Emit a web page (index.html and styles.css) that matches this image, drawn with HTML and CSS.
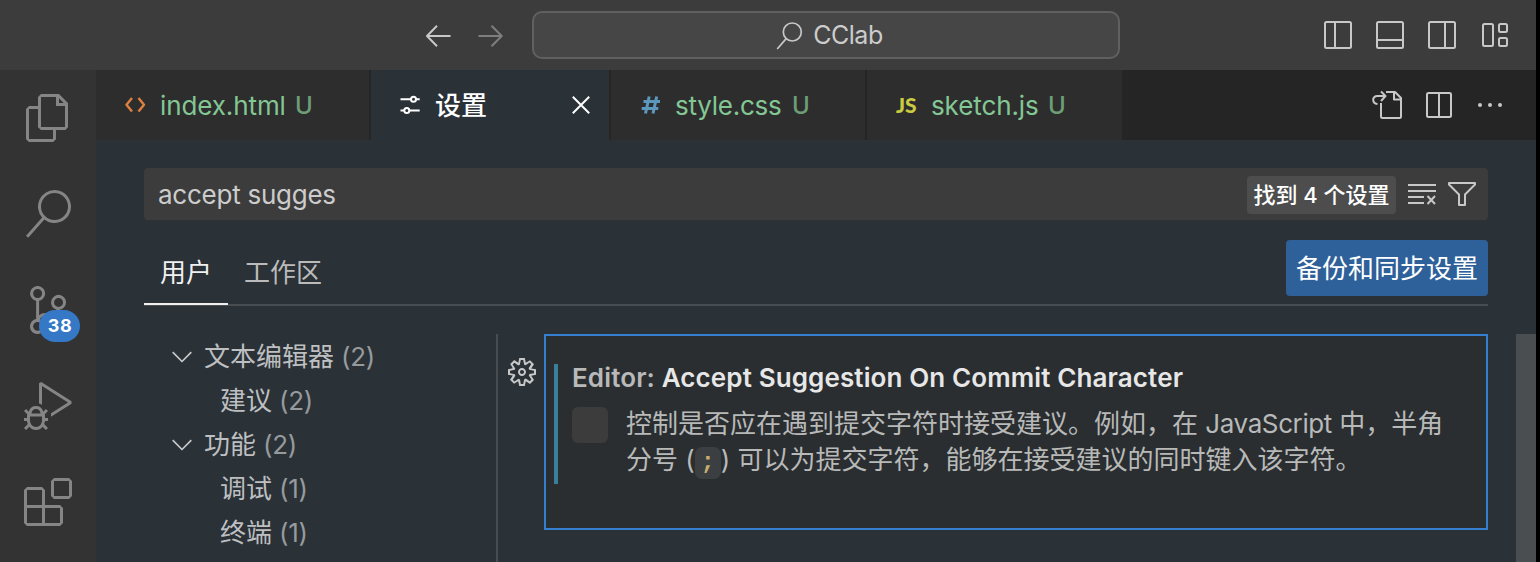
FILE: index.html
```html
<!DOCTYPE html>
<html lang="zh-CN">
<head>
<meta charset="utf-8">
<title>设置 - CClab</title>
<link rel="stylesheet" href="styles.css">
</head>
<body>
<div class="window">
  <header class="titlebar">
    <div class="history">
      <svg class="icon" width="26" height="24" viewBox="425 24 26 24"><path class="line light" d="M450.500 36H427M437 25.700L427 36L437 46.300"/></svg>
      <svg class="icon" width="26" height="24" viewBox="477 24 26 24"><path class="line dim" d="M478.500 36H502M491.500 25.700L501.700 36L491.500 46.300"/></svg>
    </div>
    <div class="command">
      <svg class="icon" width="28" height="30" viewBox="777 20 28 30"><g class="line light thin"><circle cx="793.300" cy="31" r="9"/><path d="M787.200 37.600L778.200 48"/></g></svg>
      <span class="project">CClab</span>
    </div>
    <div class="layouts">
      <svg class="icon" width="28" height="28" viewBox="0 0 28 28"><g class="line light"><rect x="1" y="1" width="26" height="26" rx="1.500"/><path d="M11 1V27"/></g></svg>
      <svg class="icon" width="28" height="28" viewBox="0 0 28 28"><g class="line light"><rect x="1" y="1" width="26" height="26" rx="1.500"/><path d="M1 19H27"/></g></svg>
      <svg class="icon" width="28" height="28" viewBox="0 0 28 28"><g class="line light"><rect x="1" y="1" width="26" height="26" rx="1.500"/><path d="M17 1V27"/></g></svg>
      <svg class="icon" width="28" height="28" viewBox="1480 21 28 28"><g class="line light"><rect x="1483" y="24" width="10" height="22" rx="1.500"/><rect x="1499" y="24" width="8" height="8" rx="1.500"/><rect x="1499" y="38" width="8" height="8" rx="1.500"/></g></svg>
    </div>
  </header>
  <div class="workbench">
    <nav class="activity">
      <svg width="48" height="48" viewBox="0 0 24 24"><path d="M17.500 0h-9L7 1.500V6H2.500L1 7.500v15.070L2.500 24h12.070L16 22.570V18h4.700l1.300-1.430V4.500L17.500 0zm0 2.120l2.380 2.380H17.500V2.120zm-3 20.380h-12v-15H7v9.070L8.500 18h6v4.500zm6-6h-12v-15H16V6h4.500v10.500z"/></svg>
      <svg width="48" height="48" viewBox="0 0 24 24"><path d="M15.250 0a8.250 8.250 0 0 0-6.180 13.720L1 22.880l1.120 1 8.050-9.120A8.251 8.251 0 1 0 15.250.01V0zm0 15a6.750 6.750 0 1 1 0-13.500 6.750 6.750 0 0 1 0 13.500z"/></svg>
      <div class="scm">
        <svg width="48" height="48" viewBox="0 0 24 24"><path d="M21.007 8.222A3.738 3.738 0 0 0 15.045 5.200a3.737 3.737 0 0 0 1.156 6.583 2.988 2.988 0 0 1-2.668 1.670h-2.990a4.456 4.456 0 0 0-2.989 1.165V7.400a3.737 3.737 0 1 0-1.494 0v9.117a3.776 3.776 0 1 0 1.816.099 2.990 2.990 0 0 1 2.668-1.667h2.990a4.484 4.484 0 0 0 4.223-3.039 3.736 3.736 0 0 0 3.250-3.687zM4.565 3.738a2.242 2.242 0 1 1 4.484 0 2.242 2.242 0 0 1-4.484 0zm4.484 16.441a2.242 2.242 0 1 1-4.484 0 2.242 2.242 0 0 1 4.484 0zm8.221-9.715a2.242 2.242 0 1 1 0-4.485 2.242 2.242 0 0 1 0 4.485z"/></svg>
        <span class="badge">38</span>
      </div>
      <svg width="48" height="48" viewBox="0 0 24 24"><path d="M10.940 13.500l-1.320 1.320a3.730 3.730 0 0 0-7.240 0L1.060 13.500 0 14.560l1.720 1.720-.22.22V18H0v1.500h1.500v.08c.077.489.214.966.41 1.420L0 22.940 1.060 24l1.650-1.650A4.308 4.308 0 0 0 6 24a4.310 4.310 0 0 0 3.290-1.650L10.940 24 12 22.940 10.090 21c.198-.464.336-.951.41-1.450v-.1H12V18h-1.500v-1.500l-.22-.22L12 14.560l-1.060-1.060zM6 13.500a2.250 2.250 0 0 1 2.250 2.250h-4.500A2.250 2.250 0 0 1 6 13.500zm3 6a3.330 3.330 0 0 1-3 3 3.330 3.330 0 0 1-3-3v-2.250h6v2.250zm14.760-9.900v1.260L13.500 17.370V15.600l8.500-5.370L9 2v9.460a5.070 5.070 0 0 0-1.500-.72V.63L8.640 0l15.120 9.600z"/></svg>
      <svg width="48" height="48" viewBox="0 0 24 24"><path d="M13.500 1.500L15 0h7.500L24 1.500V9l-1.500 1.500H15L13.500 9V1.500zm1.500 0V9h7.500V1.500H15zM0 15V6l1.500-1.500H9L10.500 6v7.500H18l1.500 1.500v7.500L18 24H1.500L0 22.500V15zm9-1.500V6H1.500v7.500H9zM9 15H1.500v7.500H9V15zm1.500 7.500H18V15h-7.500v7.500z"/></svg>
    </nav>
    <main class="editor">
      <div class="tabs">
        <div class="tab tab-html">
          <svg class="icon" width="22" height="18" viewBox="124 96 22 18"><path class="line html-mark" d="M132 98L126.500 104.700L132 111.500M138.500 98L144 104.700L138.500 111.500"/></svg>
          <span class="name">index.html</span><span class="status">U</span>
        </div>
        <div class="tab tab-settings">
          <svg class="icon" width="20" height="20" viewBox="400 95 20 20"><g class="line white"><path d="M400.500 99.300H411M416 99.300H419.700M400.500 110.600H404.200M409.400 110.600H419.700"/><circle cx="413.500" cy="99.300" r="2.500"/><circle cx="406.800" cy="110.600" r="2.500"/></g></svg>
          <span class="label">设置</span>
          <svg class="icon close" width="20" height="20" viewBox="571 95 20 20"><path class="line white" d="M572.800 96.800L589.200 113.200M589.200 96.800L572.800 113.200"/></svg>
        </div>
        <div class="tab tab-css">
          <svg class="icon" width="20" height="18" viewBox="641 96 20 18"><path class="line hash" d="M649.200 96.500L645.500 113.500M656.700 96.500L653 113.500M643.500 101.500H660M641.700 108.500H658.300"/></svg>
          <span class="name">style.css</span><span class="status">U</span>
        </div>
        <div class="tab tab-js">
          <span class="js-mark">JS</span>
          <span class="name">sketch.js</span><span class="status">U</span>
        </div>
        <div class="actions">
          <svg class="icon" width="32" height="32" viewBox="1371 89 32 32"><g class="line light"><path d="M1386 92H1395L1401 98V116.500Q1401 118 1399.500 118H1382.500Q1381 118 1381 116.500V103M1394 92V99.500H1401"/><path d="M1377.500 104C1372 103.500 1371.500 96 1377.500 96H1385M1381 91.500L1385.500 96L1381 101"/></g></svg>
          <svg class="icon" width="26" height="26" viewBox="0 0 26 26"><g class="line light"><rect x="1" y="1" width="24" height="24" rx="1.500"/><path d="M13 1V25"/></g></svg>
          <svg class="icon dots" width="26" height="6" viewBox="0 0 26 6"><circle cx="3" cy="3" r="2"/><circle cx="13" cy="3" r="2"/><circle cx="23" cy="3" r="2"/></svg>
        </div>
      </div>
      <section class="settings">
        <div class="search">
          <span class="query">accept sugges</span>
          <span class="count">找到 4 个设置</span>
          <svg class="icon clear" width="28" height="22" viewBox="1408 183 28 22"><path class="line light flat" d="M1408 185H1436M1408 191H1436M1408 197H1424M1408 203H1424M1427.500 196L1435 204M1435 196L1427.500 204"/></svg>
          <svg class="icon" width="28" height="24" viewBox="1448 182 28 24"><path class="line light" d="M1449 183H1475V184.500L1465 194.500V205H1459V194.500L1449 184.500Z"/></svg>
        </div>
        <div class="scopes">
          <span class="scope current">用户</span>
          <span class="scope">工作区</span>
          <button class="sync">备份和同步设置</button>
        </div>
        <div class="content">
          <div class="tree">
            <div class="node"><svg class="icon" width="20" height="12" viewBox="0 0 20 12"><path class="line light thin" d="M.7 1.200L10 10.500L19.300 1.200"/></svg><span>文本编辑器</span><span class="num">(2)</span></div>
            <div class="node child"><span>建议</span><span class="num">(2)</span></div>
            <div class="node"><svg class="icon" width="20" height="12" viewBox="0 0 20 12"><path class="line light thin" d="M.7 1.200L10 10.500L19.300 1.200"/></svg><span>功能</span><span class="num">(2)</span></div>
            <div class="node child"><span>调试</span><span class="num">(1)</span></div>
            <div class="node child"><span>终端</span><span class="num">(1)</span></div>
          </div>
          <div class="gutter">
            <svg class="gear" width="32" height="32" viewBox="0 0 16 16"><path d="M9.100 4.400L8.600 2H7.400l-.5 2.400-.7.3-2-1.300-.9.8 1.300 2-.2.7-2.400.5v1.200l2.400.5.3.8-1.300 2 .8.8 2-1.300.8.3.4 2.300h1.200l.5-2.400.8-.3 2 1.300.8-.8-1.300-2 .3-.8 2.300-.4V7.400l-2.400-.5-.3-.8 1.300-2-.8-.8-2 1.300-.7-.2zM9.400 1l.5 2.400L12 2.100l2 2-1.400 2.100 2.400.4v2.800l-2.400.5L14 12l-2 2-2.100-1.400-.5 2.400H6.600l-.5-2.400L4 13.900l-2-2 1.400-2.100L1 9.400V6.600l2.400-.5L2.100 4l2-2 2.100 1.400.4-2.400h2.800zm.6 7c0 1.100-.9 2-2 2s-2-.9-2-2 .9-2 2-2 2 .9 2 2zM8 9c.6 0 1-.4 1-1s-.4-1-1-1-1 .4-1 1 .4 1 1 1z"/></svg>
          </div>
          <article class="setting">
            <div class="modified"></div>
            <div class="detail">
              <h2 class="title"><span class="category">Editor: </span><span class="key">Accept Suggestion On Commit Character</span></h2>
              <div class="option">
                <span class="checkbox"></span>
                <p class="desc"><span class="row">控制是否应在遇到提交字符时接受建议。例如，在 <span class="latin">JavaScript</span> 中，半角</span><span class="row">分号 (<code>;</code>) 可以为提交字符，能够在接受建议的同时键入该字符。</span></p>
              </div>
            </div>
          </article>
          <div class="scrollbar"></div>
        </div>
      </section>
    </main>
  </div>
</div>
</body>
</html>
```
FILE: styles.css
```css
* { box-sizing: border-box; }
body { margin: 0; width: 1540px; height: 562px; overflow: hidden; background: #000; font-family: Inter, "Noto Sans CJK SC", sans-serif; font-size: 26px; color: #ccc; }
.window { width: 1536px; height: 562px; display: flex; flex-direction: column; overflow: hidden; }
.icon { display: block; flex: none; }
.line { fill: none; stroke-width: 2; stroke-linejoin: round; }
.light { stroke: #c8c8c8; }
.dim { stroke: #7e7e7e; }
.white { stroke: #fff; }
.thin { stroke-width: 1.700; }

.titlebar { height: 70px; flex: none; display: flex; background: #3c3c3c; }
.history { display: flex; gap: 26px; padding: 24px 29px 0 425px; }
.command { width: 588px; height: 48px; margin-top: 11px; padding-left: 7px; display: flex; justify-content: center; align-items: center; gap: 9px; border: 2px solid #606060; border-radius: 10px; background: #464646; line-height: 46px; }
.command .icon { margin-top: 1px; }
.project { font-size: 25px; letter-spacing: -.5px; }
.layouts { display: flex; gap: 24px; margin-left: 204px; padding-top: 21px; }

.workbench { display: flex; flex: 1; min-height: 0; }
.activity { width: 96px; flex: none; padding: 24px 24px 0; display: flex; flex-direction: column; gap: 48px; background: #333; fill: #858585; }
.activity svg { display: block; flex: none; }
.scm { position: relative; height: 48px; }
.badge { position: absolute; left: 15px; top: 24px; width: 41px; height: 32px; border-radius: 16px; background: #3478c6; color: #fff; font-size: 18px; font-weight: 700; line-height: 32px; text-align: center; letter-spacing: .5px; padding-left: 1px; }

.editor { width: 1440px; flex: none; display: flex; flex-direction: column; background: #2a3137; }
.tabs { height: 70px; flex: none; display: flex; background: #252525; }
.tab { height: 70px; display: flex; align-items: center; background: #2d2d2d; border-right: 2px solid #252525; line-height: 72px; }
.tab span { padding-top: 2px; }
.tab-html { width: 275px; padding-left: 28px; }
.tab-settings { width: 240px; padding-left: 29px; background: #2a3137; color: #fff; }
.tab-settings .label { margin-left: 15px; font-weight: 500; }
.close { margin-left: 84px; }
.tab-css { width: 256px; padding-left: 30px; }
.tab-js { width: 255px; padding-left: 29px; border-right: 0; }
.name { width: 125px; margin-left: 14px; color: #83c794; white-space: nowrap; letter-spacing: -.1px; }
.tab-css .name { width: 107px; letter-spacing: -.25px; }
.tab-js .name { width: 107px; letter-spacing: -.1px; }
.status { margin-left: 10px; color: #6c9f78; font-size: 24px; font-weight: 500; }
.html-mark { stroke: #dc8140; stroke-width: 2.400; }
.hash { stroke: #5c98bd; stroke-width: 3; }
.tab .js-mark { width: 21px; padding: 0; color: #cbcb41; font-family: Lato, sans-serif; font-weight: 900; font-size: 21px; line-height: 70px; }
.actions { display: flex; align-items: center; gap: 23px; margin-left: 249px; }
.dots { margin-left: 2px; fill: #c8c8c8; }

.settings { flex: 1; min-height: 0; padding: 28px 0 0 48px; display: flex; flex-direction: column; }
.search { width: 1344px; height: 52px; flex: none; display: flex; align-items: center; padding: 0 12px 0 14px; border-radius: 4px; background: #3c3c3c; }
.query { margin-right: auto; padding-top: 2px; line-height: 52px; letter-spacing: -.25px; }
.count { width: 149px; height: 38px; margin-top: 2px; border-radius: 4px; background: #4d4d4d; color: #fff; text-align: center; font-size: 22px; font-weight: 500; line-height: 38px; white-space: nowrap; }
.clear { margin: 0 12px; }
.scopes { width: 1344px; height: 86px; flex: none; display: flex; border-bottom: 2px solid #474d50; padding-top: 20px; }
.scope { height: 66px; padding: 0 17px 0 16px; line-height: 66px; color: #bbb; white-space: nowrap; }
.scope.current { width: 84px; height: 65px; padding-right: 0; color: #f0f0f0; border-bottom: 2px solid #f0f0f0; }
.sync { width: 202px; height: 56px; margin-left: auto; padding: 2px 0 0; border: 0; border-radius: 4px; background: #2e6199; color: #fff; font: inherit; line-height: 54px; white-space: nowrap; }

.content { display: flex; flex: 1; min-height: 0; padding-top: 28px; }
.tree { width: 354px; flex: none; border-right: 2px solid #474d50; }
.node { height: 44px; display: flex; align-items: center; padding-left: 28px; line-height: 44px; color: #bebfc0; }
.node span { padding-top: 2px; }
.node .icon { margin: 1px 12px 0 0; }
.child { padding-left: 76px; }
.num { margin-left: 7px; color: #979a9c; letter-spacing: -.3px; }
.gutter { width: 46px; padding: 22px 0 0 8px; }
.gear { display: block; fill: #c8c8c8; }
.setting { width: 944px; height: 196px; flex: none; display: flex; border: 2px solid #347fd0; background: #2a2e30; padding: 28px 0 0 8px; }
.modified { width: 4px; height: 120px; flex: none; background: #39809c; }
.detail { padding-left: 14px; }
.title { margin: 0; height: 43px; font-size: 26px; font-weight: 600; line-height: 27px; letter-spacing: .12px; white-space: pre; }
.category { color: #b9b9b9; }
.key { color: #e7e7e7; }
.option { display: flex; }
.checkbox { width: 36px; height: 36px; border-radius: 6px; background: #3c3c3c; margin-right: 18px; }
.desc { margin: -1px 0 0; line-height: 36px; color: #b8b9b9; }
.row { display: block; white-space: nowrap; }
.latin { letter-spacing: -.4px; }
code { display: inline-block; width: 26px; height: 32px; border-radius: 7px; background: #3b3f42; color: #c9ac70; font-family: "Liberation Mono", monospace; font-size: 24px; font-weight: 700; line-height: 32px; text-align: center; }
.scrollbar { width: 20px; margin-left: 28px; background: #4a4e50; }
```
